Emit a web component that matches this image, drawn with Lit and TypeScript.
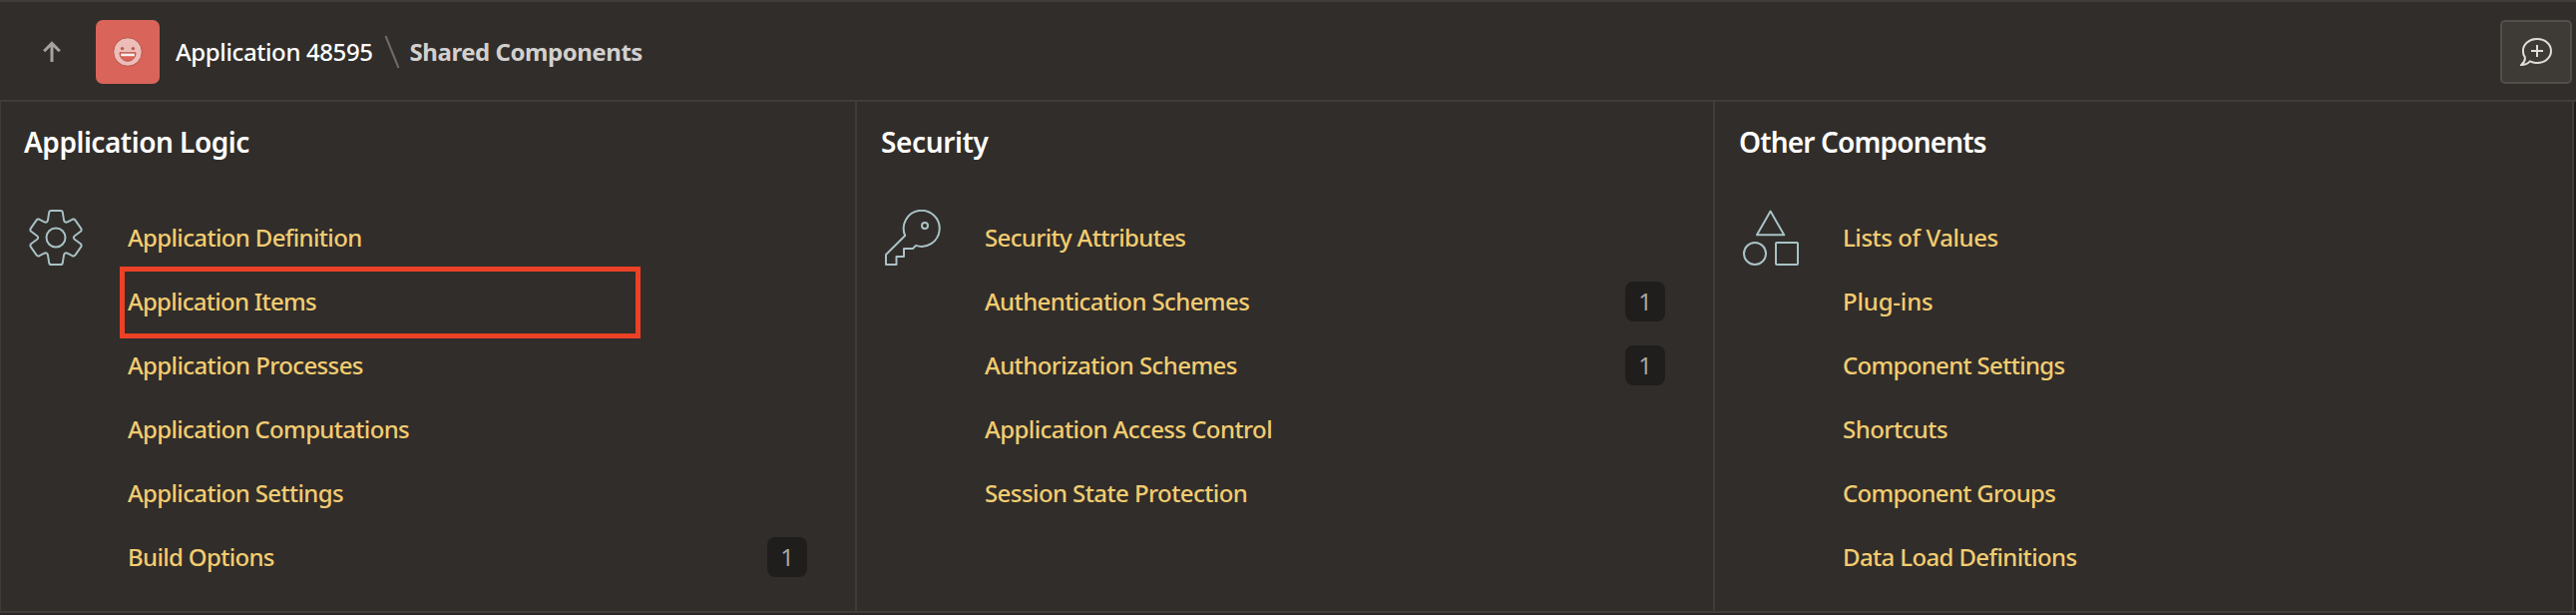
import { LitElement, html, css, svg, nothing } from "lit";
import { customElement, property } from "lit/decorators.js";
import { styleMap } from "lit/directives/style-map.js";
import { classMap } from "lit/directives/class-map.js";

interface Entry {
  label: string;
  /** letter spacing in px */
  track: number;
  count?: number;
  marked?: boolean;
}

interface Section {
  title: string;
  track: number;
  icon: "gear" | "key" | "shapes";
  entries: Entry[];
}

const sections: Section[] = [
  {
    title: "Application Logic",
    track: -0.48,
    icon: "gear",
    entries: [
      { label: "Application Definition", track: -0.65 },
      { label: "Application Items", track: -0.74, marked: true },
      { label: "Application Processes", track: -0.62 },
      { label: "Application Computations", track: -0.67 },
      { label: "Application Settings", track: -0.65 },
      { label: "Build Options", track: -0.67, count: 1 },
    ],
  },
  {
    title: "Security",
    track: -0.36,
    icon: "key",
    entries: [
      { label: "Security Attributes", track: -0.66 },
      { label: "Authentication Schemes", track: -0.61, count: 1 },
      { label: "Authorization Schemes", track: -0.58, count: 1 },
      { label: "Application Access Control", track: -0.58 },
      { label: "Session State Protection", track: -0.58 },
    ],
  },
  {
    title: "Other Components",
    track: -0.84,
    icon: "shapes",
    entries: [
      { label: "Lists of Values", track: -0.45 },
      { label: "Plug-ins", track: -0.18 },
      { label: "Component Settings", track: -0.69 },
      { label: "Shortcuts", track: -0.54 },
      { label: "Component Groups", track: -0.73 },
      { label: "Data Load Definitions", track: -0.63 },
    ],
  },
];

const glyphs = {
  gear: svg`
    <path transform="translate(28 28) scale(.965 1) translate(-28 -28)" d="M23 1H33Q34.8 1 35.1 3L36.3 10.3Q36.9 13.5 40 12.3L45 9.8Q47 9 48.2 10.6L54 18.6Q55.2 20.4 53.8 21.8L47.5 26.2Q45.4 28 47.5 29.8L53.8 34.2Q55.2 35.6 54 37.4L48.2 45.4Q47 47 45 46.2L40 43.7Q36.9 42.5 36.3 45.7L35.1 53Q34.8 55 33 55H23Q21.2 55 20.9 53L19.7 45.7Q19.1 42.5 16 43.7L11 46.2Q9 47 7.8 45.4L2 37.4Q.8 35.6 2.2 34.2L8.5 29.8Q10.6 28 8.5 26.2L2.2 21.8Q.8 20.4 2 18.6L7.8 10.6Q9 9 11 9.8L16 12.3Q19.1 13.5 19.7 10.3L20.9 3Q21.2 1 23 1Z"/>
    <circle cx="28" cy="28" r="9.5"/>`,
  key: svg`
    <path d="M1 45V55H11.5V47H19V39H28L31 35.9A18 18 0 1 0 20.2 26Z"/>
    <circle cx="40" cy="16" r="3"/>`,
  shapes: svg`
    <path d="M27.6 1.6L41.2 25.3H14Z"/>
    <circle cx="12" cy="44" r="11"/>
    <rect x="33" y="33" width="22" height="22" rx="1"/>`,
};

@customElement("page-header")
class PageHeader extends LitElement {
  static styles = css`
    :host {
      display: flex;
      align-items: center;
      box-sizing: border-box;
      height: 102px;
      padding: 2px 4px 0 40px;
      border-top: 2px solid #403c38;
      border-bottom: 2px solid #403c38;
      white-space: nowrap;
    }
    svg { display: block; fill: none; }
    .up { width: 24px; height: 24px; stroke: #a5a3a0; stroke-width: 3; margin-right: 32px; }
    .app {
      display: grid;
      place-items: center;
      width: 64px;
      height: 64px;
      margin-right: 16px;
      border-radius: 7px;
      background: #d9645a;
    }
    .name { font-weight: 500; letter-spacing: -0.39px; }
    .slash { width: 16px; height: 34px; stroke: #6f6b68; stroke-width: 2; margin: 0 10px 0 11px; }
    .here { font-weight: 700; color: #d2d0ce; letter-spacing: -0.46px; }
    .feedback {
      display: grid;
      place-items: center;
      box-sizing: border-box;
      width: 72px;
      height: 64px;
      margin-left: auto;
      padding: 0;
      border: 2px solid #524e4a;
      border-radius: 5px;
      background: #3e3a36;
    }
    .feedback svg { stroke: #dfddda; stroke-width: 2; }
  `;

  render() {
    return html`
      <svg class="up" viewBox="0 0 24 24"><path d="M12 22V3.6M4.2 11.2L12 3.4L19.8 11.2" /></svg>
      <span class="app">
        <svg width="32" height="32" viewBox="0 0 32 32">
          <circle cx="16" cy="16" r="14.3" fill="#ecbdb9" stroke="#b9524a" stroke-width="1" />
          <circle cx="10.6" cy="12.6" r="1.7" fill="#bd5850" />
          <circle cx="21.4" cy="12.6" r="1.7" fill="#bd5850" />
          <path d="M8 16.8H24C24 22 20.4 25.2 16 25.2S8 22 8 16.8Z" fill="#d9645a" stroke="#b9524a" />
          <path d="M9.2 17.7H22.8V20.2H9.2Z" fill="#fbf3f2" />
        </svg>
      </span>
      <span class="name">Application 48595</span>
      <svg class="slash" viewBox="0 0 16 34"><path d="M1.5 1L14.5 33" /></svg>
      <span class="here">Shared Components</span>
      <button class="feedback" aria-label="Feedback">
        <svg width="32" height="32" viewBox="0 0 32 32">
          <path d="M4.6 20.8C3.4 19.2 2.9 17.2 2.9 15C2.9 8.4 9 3 17 3S31 8.4 31 15S25 27 17 27C14.4 27 12 26.4 9.9 25.4C7.6 27.8 5 29 1.2 29C3.6 27 5.6 24 4.6 20.8Z" />
          <path d="M17 9V21M11 15H23" />
        </svg>
      </button>
    `;
  }
}

@customElement("component-section")
class ComponentSection extends LitElement {
  @property({ attribute: false }) section!: Section;

  static styles = css`
    :host {
      display: flex;
      flex-direction: column;
      box-sizing: border-box;
      border-right: 2px solid #403c38;
      white-space: nowrap;
    }
    .title {
      margin: 0;
      padding: 20px 24px 0;
      font-size: 28px;
      line-height: 40px;
      font-weight: 600;
      color: #fff;
    }
    .body { display: flex; padding: 44px 48px 0 28px; }
    .icon {
      flex: none;
      width: 56px;
      height: 56px;
      margin: 4px 44px 0 0;
      fill: none;
      stroke: #a9c2c5;
      stroke-width: 2;
      stroke-linejoin: round;
    }
    .list { flex: 1; margin: 0; padding: 0; list-style: none; }
    .row {
      position: relative;
      display: flex;
      align-items: center;
      justify-content: space-between;
      height: 64px;
    }
    .link { color: #f1cc71; font-weight: 500; }
    .badge {
      width: 40px;
      height: 40px;
      border-radius: 8px;
      background: #201e1c;
      color: #a9a6a4;
      text-align: center;
      line-height: 40px;
    }
    .row.marked::before {
      content: "";
      position: absolute;
      top: -3px;
      left: -8px;
      box-sizing: border-box;
      width: 522px;
      height: 72px;
      border: 5px solid #ec4126;
    }
  `;

  render() {
    const s = this.section;
    return html`
      <h2 class="title"><span style=${styleMap({ letterSpacing: `${s.track}px` })}>${s.title}</span></h2>
      <div class="body">
        <svg class="icon" viewBox="0 0 56 56">${glyphs[s.icon]}</svg>
        <ul class="list">
          ${s.entries.map(
            (e) => html`
              <li class=${classMap({ row: true, marked: !!e.marked })}>
                <a class="link" style=${styleMap({ letterSpacing: `${e.track}px` })}>${e.label}</a>
                ${e.count ? html`<span class="badge">${e.count}</span>` : nothing}
              </li>
            `
          )}
        </ul>
      </div>
    `;
  }
}

@customElement("app-root")
class AppRoot extends LitElement {
  static styles = css`
    :host {
      display: grid;
      grid-template-rows: 102px 512px 2px;
      height: 616px;
      background: #312d2a;
      color: #fff;
      font-family: "Noto Sans", "Open Sans", sans-serif;
      font-size: 24px;
      line-height: 34px;
    }
    .sections {
      display: grid;
      grid-template-columns: 859px 860px 861px 2px;
      box-sizing: border-box;
      height: 512px;
      border-bottom: 2px solid #403c38;
      box-shadow: inset 1px 0 #403c38;
    }
    .edge { background: #1e1b19; }
    .foot { background: #2a2425; }
  `;

  render() {
    return html`
      <page-header></page-header>
      <div class="sections">
        ${sections.map((s) => html`<component-section .section=${s}></component-section>`)}
        <div class="edge"></div>
      </div>
      <div class="foot"></div>
    `;
  }
}
